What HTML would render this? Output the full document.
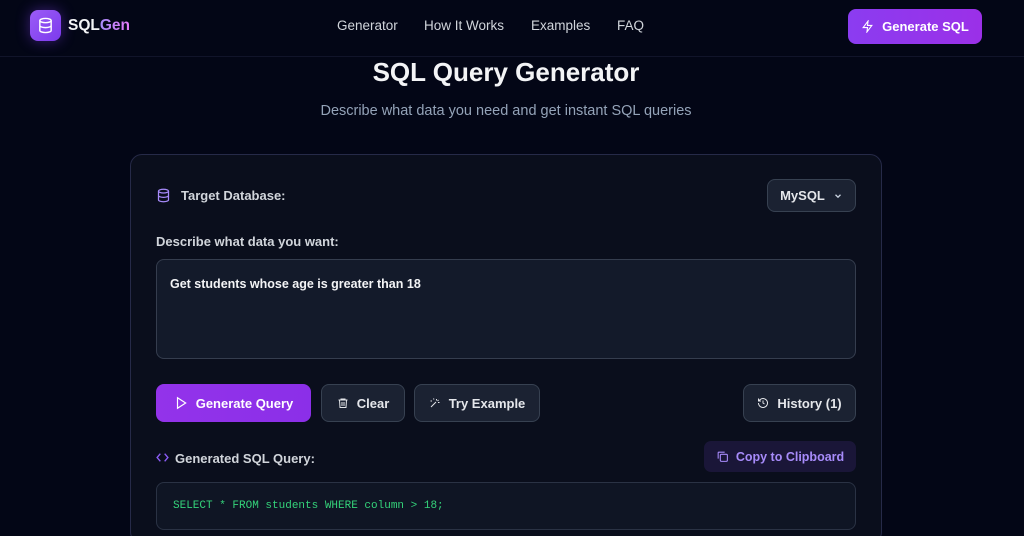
<!DOCTYPE html>
<html style="overflow:hidden;height:536px"><head><meta charset="utf-8"><style>
*{box-sizing:border-box;margin:0;padding:0}
body{width:1024px;height:536px;overflow:hidden;background:#030616;font-family:"Liberation Sans",sans-serif;color:#e5e7eb;position:relative}
.hdr{position:absolute;left:0;top:0;width:1024px;height:57px;border-bottom:1px solid #11142a}
.logo{position:absolute;left:30px;top:10px;width:31px;height:31px;border-radius:8px;background:linear-gradient(135deg,#9b5cf6,#7c3aed);box-shadow:0 0 14px rgba(124,58,237,.45);display:flex;align-items:center;justify-content:center}
.brand{position:absolute;left:68px;top:17px;font-size:15.5px;font-weight:bold;color:#f3f4f6}
.brand span{background:linear-gradient(90deg,#a78bfa,#e879f9);-webkit-background-clip:text;color:transparent}
.nav{position:absolute;top:18px;font-size:13.5px;color:#d1d5db}
.gbtn{position:absolute;left:848px;top:9px;width:134px;height:35px;border-radius:8px;background:linear-gradient(90deg,#8b3cf0,#9b30e8);color:#fff;font-size:13px;font-weight:bold;display:flex;align-items:center;justify-content:center;gap:8px}
h1{position:absolute;top:57px;width:1012px;text-align:center;font-size:26px;font-weight:bold;color:#f3f4f6}
.sub{position:absolute;top:103px;width:1012px;text-align:center;font-size:14.5px;color:#94a3b8}
.card{position:absolute;left:130px;top:154px;width:752px;height:390px;border-radius:12px;background:#0a0e1c;border:1px solid #262a48}
.lbl{position:absolute;font-size:13px;font-weight:bold;color:#d1d5db}
.btn{position:absolute;height:38px;border-radius:8px;background:#1b2232;border:1px solid #374151;color:#e5e7eb;font-size:13px;font-weight:bold;display:flex;align-items:center;justify-content:center;gap:8px}
.ta{position:absolute;left:156px;top:259px;width:700px;height:100px;border-radius:8px;background:#131a2a;border:1px solid #353d4e;padding:17px 13px;font-size:12.5px;font-weight:bold;color:#f3f4f6}
.code{position:absolute;left:156px;top:482px;width:700px;height:48px;border-radius:8px;background:#0f1524;border:1px solid #2a3244;padding:17px 16px;font-family:"Liberation Mono",monospace;font-size:11px;color:#34d37a}
</style></head><body>
<div class="hdr"></div>
<div class="logo"><svg width="17" height="17" viewBox="0 0 24 24" fill="none" stroke="#fff" stroke-width="2"><ellipse cx="12" cy="5" rx="8" ry="3"/><path d="M4 5v14c0 1.7 3.6 3 8 3s8-1.3 8-3V5M4 12c0 1.7 3.6 3 8 3s8-1.3 8-3"/></svg></div>
<div class="brand">SQL<span>Gen</span></div>
<div class="nav" style="left:337px">Generator</div>
<div class="nav" style="left:424px">How It Works</div>
<div class="nav" style="left:531px">Examples</div>
<div class="nav" style="left:617px">FAQ</div>
<div class="gbtn"><svg width="13" height="13" viewBox="0 0 24 24" fill="none" stroke="#fff" stroke-width="2"><path d="M13 2L4 14h8l-1 8 9-12h-8z"/></svg>Generate SQL</div>
<h1>SQL Query Generator</h1>
<div class="sub">Describe what data you need and get instant SQL queries</div>
<div class="card"></div>
<svg style="position:absolute;left:156px;top:188px" width="15" height="15" viewBox="0 0 24 24" fill="none" stroke="#a78bfa" stroke-width="2"><ellipse cx="12" cy="5" rx="8" ry="3"/><path d="M4 5v14c0 1.7 3.6 3 8 3s8-1.3 8-3V5M4 12c0 1.7 3.6 3 8 3s8-1.3 8-3"/></svg>
<div class="lbl" style="left:181px;top:188px">Target Database:</div>
<div class="btn" style="left:767px;top:179px;width:89px;height:33px">MySQL <svg width="10" height="10" viewBox="0 0 24 24" fill="none" stroke="#cbd5e1" stroke-width="3"><path d="M6 9l6 6 6-6"/></svg></div>
<div class="lbl" style="left:156px;top:234px">Describe what data you want:</div>
<div class="ta">Get students whose age is greater than 18</div>
<div class="btn" style="left:156px;top:384px;width:155px;background:linear-gradient(90deg,#9333ea,#8b2fe8);border:none;color:#fff"><svg width="14" height="14" viewBox="0 0 24 24" fill="none" stroke="#fff" stroke-width="2"><path d="M6 3l14 9-14 9z"/></svg>Generate Query</div>
<div class="btn" style="left:321px;top:384px;width:84px"><svg width="12" height="12" viewBox="0 0 24 24" fill="none" stroke="#e5e7eb" stroke-width="2"><path d="M3 6h18M8 6V4h8v2M5 6l1 15h12l1-15M10 10v8M14 10v8"/></svg>Clear</div>
<div class="btn" style="left:414px;top:384px;width:126px"><svg width="12" height="12" viewBox="0 0 24 24" fill="none" stroke="#e5e7eb" stroke-width="2"><path d="M4 20L14 10M15 4v3M19 6l-2 2M21 11h-3M9 3l1 2M6 8H3"/></svg>Try Example</div>
<div class="btn" style="left:743px;top:384px;width:113px"><svg width="12" height="12" viewBox="0 0 24 24" fill="none" stroke="#e5e7eb" stroke-width="2"><path d="M3 12a9 9 0 1 0 3-6.7L3 8M3 3v5h5M12 7v5l3 2"/></svg>History (1)</div>
<svg style="position:absolute;left:156px;top:452px" width="13" height="11" viewBox="0 0 24 20" fill="none" stroke="#8b5cf6" stroke-width="2.5"><path d="M8 3L2 10l6 7M16 3l6 7-6 7"/></svg>
<div class="lbl" style="left:175px;top:451px">Generated SQL Query:</div>
<div style="position:absolute;left:704px;top:441px;width:152px;height:31px;border-radius:7px;background:#1a1638;color:#a78bfa;font-size:12.5px;font-weight:bold;display:flex;align-items:center;justify-content:center;gap:7px"><svg width="13" height="13" viewBox="0 0 24 24" fill="none" stroke="#a78bfa" stroke-width="2"><rect x="8" y="8" width="13" height="13" rx="2"/><path d="M4 16V5a1 1 0 0 1 1-1h11"/></svg>Copy to Clipboard</div>
<div class="code">SELECT * FROM students WHERE column &gt; 18;</div>
</body></html>
